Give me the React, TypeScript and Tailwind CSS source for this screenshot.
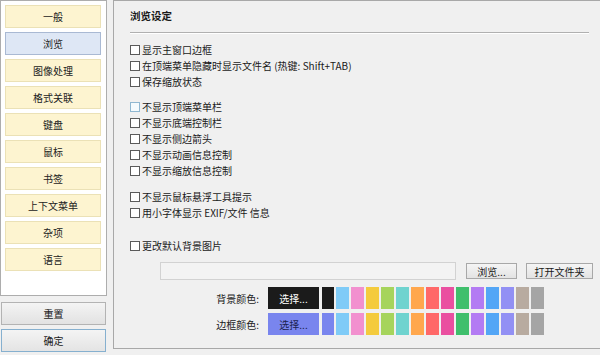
import React from "react";

const FONT = { fontFamily: '"Microsoft YaHei", "Noto Sans CJK SC", "Noto Sans", sans-serif' };

const navItems = ["一般", "浏览", "图像处理", "格式关联", "键盘", "鼠标", "书签", "上下文菜单", "杂项", "语言"];

const swatches = [
  "#7fcbf7",
  "#f290cf",
  "#f4cb3d",
  "#a6d45c",
  "#6fd3cf",
  "#ffa74d",
  "#ff6868",
  "#ea4fa0",
  "#3fbf6c",
  "#b37bf3",
  "#53a6f6",
  "#9290f4",
  "#b8aba0",
  "#a5a5a5",
];

function Check({ label, focus }: { label: string; focus?: boolean }) {
  return (
    <div className="flex h-[16px] items-center">
      <div
        className={
          focus
            ? "h-[10px] w-[10px] border border-[#8fb7d1] bg-[#f4fafd]"
            : "h-[10px] w-[10px] border border-[#5a5a5a] bg-white"
        }
      />
      <span className="ml-[2px] text-[10px] leading-[12px] text-[#1a1a1a] whitespace-nowrap">{label}</span>
    </div>
  );
}

function ColorRow({ label, first, btnBg, btnText }: { label: string; first: string; btnBg: string; btnText: string }) {
  return (
    <div className="flex h-[22px] items-stretch">
      <div className="flex w-[116px] items-center justify-end pr-[9px] text-[10px] text-[#1a1a1a]">{label}</div>
      <div
        className="flex w-[51px] items-center justify-center text-[10px]"
        style={{ backgroundColor: btnBg, color: btnText }}
      >
        选择...
      </div>
      <div className="ml-[3px] flex gap-[2px]">
        <div className="w-[12px]" style={{ backgroundColor: first }} />
        {swatches.map((c, i) => (
          <div key={i} className="w-[13px]" style={{ backgroundColor: c }} />
        ))}
      </div>
    </div>
  );
}

export default function App() {
  return (
    <div className="flex h-[355px] w-[600px] overflow-hidden bg-[#f0f0f0]" style={FONT}>
      {/* left column */}
      <div className="flex w-[107px] flex-col">
        <div className="flex h-[296px] flex-col gap-[4px] border border-[#adadad] bg-white pl-[4px] pt-[4px]">
          {navItems.map((n) => (
            <div
              key={n}
              className={
                n === "浏览"
                  ? "flex h-[23px] w-[96px] items-center justify-center border border-[#a9b9d3] bg-[#dee7f5] text-[10px] text-[#222]"
                  : "flex h-[23px] w-[96px] items-center justify-center border border-[#ebe1b6] bg-[#fdf4d0] text-[10px] text-[#222]"
              }
            >
              {n}
            </div>
          ))}
        </div>
        <div className="ml-[1px] mt-[6px] flex h-[23px] w-[105px] items-center justify-center border border-[#b3b3b3] bg-gradient-to-b from-[#f4f4f4] to-[#e2e2e2] text-[10px] text-[#1a1a1a]">
          重置
        </div>
        <div className="ml-[1px] mt-[4px] flex h-[23px] w-[105px] items-center justify-center border border-[#86b0cf] bg-gradient-to-b from-[#f4f4f4] to-[#e4e4e4] text-[10px] text-[#1a1a1a]">
          确定
        </div>
      </div>

      {/* right panel */}
      <div className="ml-[6px] flex h-[349px] flex-1 flex-col border-l border-t border-b border-[#a8a8a8] bg-[#f0f0f0] pl-[16px]">
        <div className="pt-[8px] text-[10.5px] font-bold leading-[13px] text-[#1a1a1a]">浏览设定</div>
        <div className="mt-[10px] mr-[11px] h-[2px] border-t border-[#b0b0b0] border-b border-b-white" />

        <div className="mt-[8px] flex flex-col">
          <Check label="显示主窗口边框" />
          <Check label="在顶端菜单隐藏时显示文件名 (热键: Shift+TAB)" />
          <Check label="保存缩放状态" />
        </div>
        <div className="mt-[9px] flex flex-col">
          <Check label="不显示顶端菜单栏" focus />
          <Check label="不显示底端控制栏" />
          <Check label="不显示侧边箭头" />
          <Check label="不显示动画信息控制" />
          <Check label="不显示缩放信息控制" />
        </div>
        <div className="mt-[10px] flex flex-col">
          <Check label="不显示鼠标悬浮工具提示" />
          <Check label="用小字体显示 EXIF/文件 信息" />
        </div>
        <div className="mt-[17px] flex flex-col">
          <Check label="更改默认背景图片" />
        </div>

        <div className="mt-[8px] flex h-[18px] items-center pl-[30px]">
          <div className="h-[18px] w-[296px] border border-[#d2d2d2] bg-[#f3f3f3]" />
          <div className="ml-[10px] flex h-[16px] w-[51px] items-center justify-center border border-[#a8a8a8] bg-gradient-to-b from-[#f5f5f5] to-[#e3e3e3] text-[10px] text-[#1a1a1a]">
            浏览...
          </div>
          <div className="ml-[9px] flex h-[16px] w-[67px] items-center justify-center border border-[#a8a8a8] bg-gradient-to-b from-[#f5f5f5] to-[#e3e3e3] text-[10px] text-[#1a1a1a]">
            打开文件夹
          </div>
        </div>

        <div className="mt-[7px] flex flex-col gap-[4px] pl-[22px]">
          <ColorRow label="背景颜色:" first="#1b1b1b" btnBg="#1b1b1b" btnText="#ffffff" />
          <ColorRow label="边框颜色:" first="#7985ee" btnBg="#7985ee" btnText="#1a2250" />
        </div>
      </div>
    </div>
  );
}
